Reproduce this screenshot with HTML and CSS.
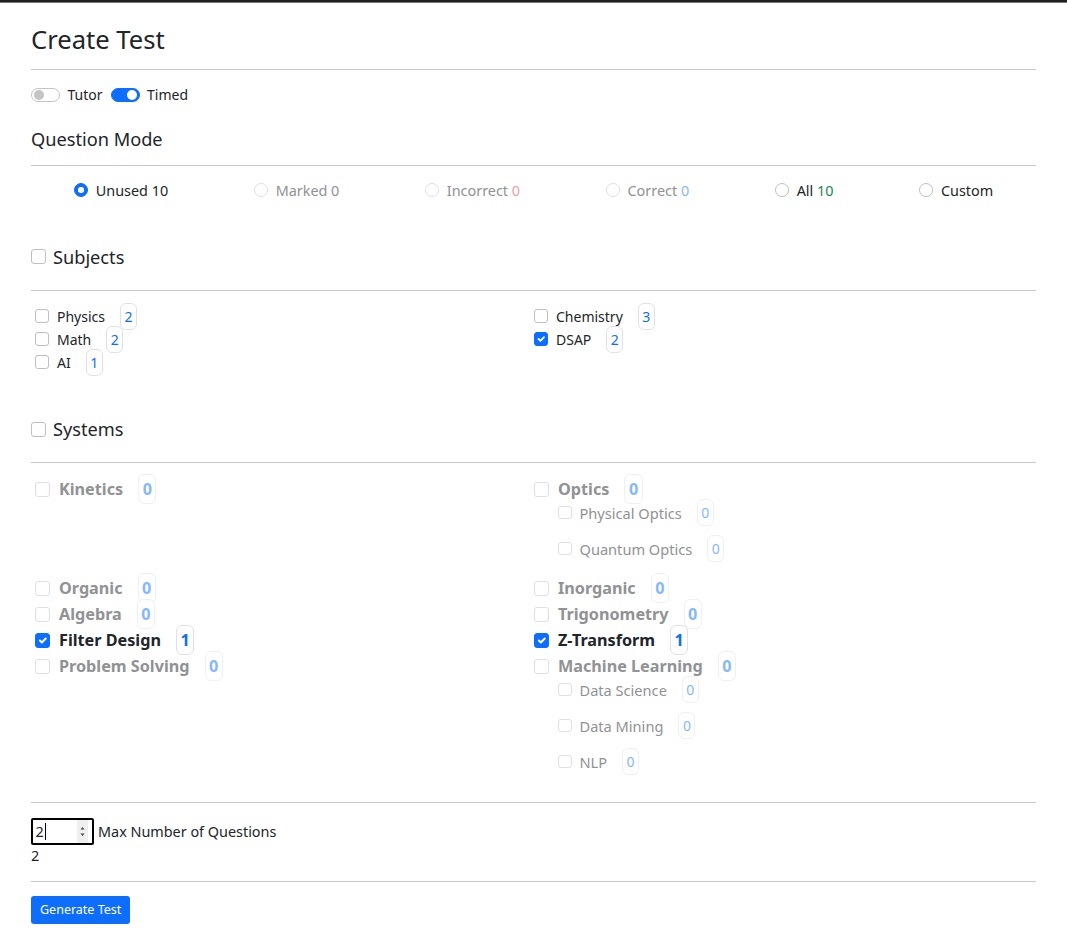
FILE: index.html
```html
<!DOCTYPE html>
<html lang="en">
<head>
<meta charset="utf-8">
<title>Create Test</title>
<link rel="stylesheet" href="styles.css">
</head>
<body>
<div class="topbar"></div>
<main class="page">
  <h1 class="title">Create Test</h1>
  <hr class="rule rule-title">

  <div class="modes">
    <label class="switch-item"><span class="switch"></span>Tutor</label>
    <label class="switch-item"><span class="switch on"></span>Timed</label>
  </div>

  <h2 class="section-title">Question Mode</h2>
  <hr class="rule rule-qm">

  <div class="radio-row">
    <label class="radio-item"><span class="radio on"></span>Unused 10</label>
    <label class="radio-item dis"><span class="radio"></span>Marked 0</label>
    <label class="radio-item dis"><span class="radio"></span>Incorrect&nbsp;<span class="n-red">0</span></label>
    <label class="radio-item dis"><span class="radio"></span>Correct&nbsp;<span class="n-blue">0</span></label>
    <label class="radio-item"><span class="radio"></span>All&nbsp;<span class="n-green">10</span></label>
    <label class="radio-item"><span class="radio"></span>Custom</label>
  </div>

  <div class="group-head group-subjects"><span class="cb cb-lg"></span>Subjects</div>
  <hr class="rule rule-group">

  <div class="subject-grid">
    <div class="subject-col">
      <div class="subj"><span class="cb"></span><span class="lbl">Physics</span><span class="badge">2</span></div>
      <div class="subj"><span class="cb"></span><span class="lbl">Math</span><span class="badge">2</span></div>
      <div class="subj"><span class="cb"></span><span class="lbl">AI</span><span class="badge">1</span></div>
    </div>
    <div class="subject-col">
      <div class="subj"><span class="cb"></span><span class="lbl">Chemistry</span><span class="badge">3</span></div>
      <div class="subj"><span class="cb on"><svg viewBox="0 0 20 20"><path d="m6 10 3 3 6-6" fill="none" stroke="#fff" stroke-width="3" stroke-linecap="round" stroke-linejoin="round"/></svg></span><span class="lbl">DSAP</span><span class="badge">2</span></div>
    </div>
  </div>

  <div class="group-head group-systems"><span class="cb cb-lg"></span>Systems</div>
  <hr class="rule rule-group rule-sys">

  <div class="sys-grid">
    <div class="sys-cell">
      <div class="sys-main dis"><span class="cb"></span><span class="lbl">Kinetics</span><span class="badge">0</span></div>
    </div>
    <div class="sys-cell">
      <div class="sys-main dis"><span class="cb"></span><span class="lbl">Optics</span><span class="badge">0</span></div>
      <div class="sys-sub dis"><span class="cb"></span><span class="lbl">Physical Optics</span><span class="badge">0</span></div>
      <div class="sys-sub dis"><span class="cb"></span><span class="lbl">Quantum Optics</span><span class="badge">0</span></div>
    </div>

    <div class="sys-cell">
      <div class="sys-main dis"><span class="cb"></span><span class="lbl">Organic</span><span class="badge">0</span></div>
    </div>
    <div class="sys-cell">
      <div class="sys-main dis"><span class="cb"></span><span class="lbl">Inorganic</span><span class="badge">0</span></div>
    </div>

    <div class="sys-cell">
      <div class="sys-main dis"><span class="cb"></span><span class="lbl">Algebra</span><span class="badge">0</span></div>
    </div>
    <div class="sys-cell">
      <div class="sys-main dis"><span class="cb"></span><span class="lbl">Trigonometry</span><span class="badge">0</span></div>
    </div>

    <div class="sys-cell">
      <div class="sys-main"><span class="cb on"><svg viewBox="0 0 20 20"><path d="m6 10 3 3 6-6" fill="none" stroke="#fff" stroke-width="3" stroke-linecap="round" stroke-linejoin="round"/></svg></span><span class="lbl">Filter Design</span><span class="badge">1</span></div>
    </div>
    <div class="sys-cell">
      <div class="sys-main"><span class="cb on"><svg viewBox="0 0 20 20"><path d="m6 10 3 3 6-6" fill="none" stroke="#fff" stroke-width="3" stroke-linecap="round" stroke-linejoin="round"/></svg></span><span class="lbl">Z-Transform</span><span class="badge">1</span></div>
    </div>

    <div class="sys-cell">
      <div class="sys-main dis"><span class="cb"></span><span class="lbl">Problem Solving</span><span class="badge">0</span></div>
    </div>
    <div class="sys-cell">
      <div class="sys-main dis"><span class="cb"></span><span class="lbl">Machine Learning</span><span class="badge">0</span></div>
      <div class="sys-sub dis"><span class="cb"></span><span class="lbl">Data Science</span><span class="badge">0</span></div>
      <div class="sys-sub dis"><span class="cb"></span><span class="lbl">Data Mining</span><span class="badge">0</span></div>
      <div class="sys-sub dis"><span class="cb"></span><span class="lbl">NLP</span><span class="badge">0</span></div>
    </div>
  </div>

  <hr class="rule rule-bottom">

  <div class="qty-row">
    <div class="num-input">
      <span class="num-val">2</span><span class="caret"></span>
      <span class="spin">
        <svg viewBox="0 0 11 23" width="11" height="23"><path d="M3.5 9.5 5.5 7 7.5 9.5Z" fill="#444"/><path d="M3.5 13.5 5.5 16 7.5 13.5Z" fill="#444"/></svg>
      </span>
    </div>
    <span class="qty-label">Max Number of Questions</span>
  </div>
  <div class="qty-val">2</div>

  <hr class="rule rule-final">

  <div class="actions">
    <button class="btn" type="button">Generate Test</button>
  </div>
</main>
</body>
</html>
```

FILE: styles.css
```css
* {
  box-sizing: border-box;
}

body {
  margin: 0;
  font-family: "Noto Sans", "Open Sans", sans-serif;
  font-size: 14px;
  color: #212529;
  background: #fff;
}

.topbar {
  height: 3px;
  background: linear-gradient(#1f1f1f 0 2px, #777 2px 3px);
}

.page {
  padding: 0 31px 10px;
}

.rule {
  height: 0;
  border: 0;
  border-top: 1px solid #c9cacc;
  margin: 0;
}

.title {
  margin: 21px 0 0;
  font-size: 25.6px;
  font-weight: 400;
  line-height: 32px;
}

.rule-title {
  margin-top: 13px;
}

/* switches */
.modes {
  margin-top: 14px;
  height: 21px;
  display: flex;
  align-items: center;
  gap: 8px;
}

.switch-item {
  display: flex;
  align-items: center;
  gap: 7.5px;
}

.switch {
  position: relative;
  width: 29px;
  height: 14px;
  border: 1px solid #c4c4c4;
  border-radius: 7px;
  background: #fff;
}

.switch::after {
  content: "";
  position: absolute;
  top: 1px;
  left: 1.5px;
  width: 10px;
  height: 10px;
  border-radius: 50%;
  background: #c4c4c4;
}

.switch.on {
  background: #0d6efd;
  border-color: #0d6efd;
}

.switch.on::after {
  left: auto;
  right: 1.5px;
  background: #fff;
}

.section-title {
  margin: 22px 0 0;
  font-size: 18.2px;
  font-weight: 400;
  line-height: 24px;
}

.rule-qm {
  margin-top: 14px;
}

/* radios */
.radio-row {
  margin-top: 13.5px;
  height: 21px;
  display: flex;
  justify-content: space-around;
  align-items: center;
  font-size: 14.4px;
}

.radio-item {
  display: flex;
  align-items: center;
}

.radio {
  flex: none;
  width: 14px;
  height: 14px;
  margin-right: 8px;
  border: 1px solid #bfbfbf;
  border-radius: 50%;
  background: #fff;
  display: flex;
  align-items: center;
  justify-content: center;
}

.radio.on {
  background: #0d6efd;
  border-color: #0d6efd;
}

.radio.on::after {
  content: "";
  width: 5.5px;
  height: 5.5px;
  border-radius: 50%;
  background: #fff;
}

.radio-item.dis {
  color: #909294;
}

.radio-item.dis .radio {
  border-color: #e0e0e0;
}

.n-red {
  color: #f0a0a7;
}

.n-blue {
  color: #86b7fe;
}

.n-green {
  color: #198754;
}

/* group headings */
.group-head {
  display: flex;
  align-items: center;
  gap: 7px;
  font-size: 18.2px;
  line-height: 24px;
}

.group-subjects {
  margin-top: 44px;
}

.group-systems {
  margin-top: 43.5px;
}

.rule-group {
  margin-top: 21.5px;
}

.rule-sys {
  margin-top: 21px;
}

/* checkboxes */
.cb {
  flex: none;
  width: 14px;
  height: 14px;
  border: 1px solid #bfbfbf;
  border-radius: 3px;
  background: #fff;
  display: flex;
  align-items: center;
  justify-content: center;
}

.cb-lg {
  width: 15px;
  height: 15px;
}

.cb.on {
  background: #0d6efd;
  border-color: #0d6efd;
}

.cb svg {
  width: 100%;
  height: 100%;
  display: block;
}

/* badges */
.badge {
  flex: none;
  display: inline-block;
  margin-left: 15px;
  padding: 2px 3.5px;
  border: 1px solid #dee2e6;
  border-radius: 6px;
  color: #0d6efd;
  line-height: 21px;
  background: #fff;
}

/* subjects */
.subject-grid {
  margin-top: 13.5px;
  padding-left: 4px;
  display: grid;
  grid-template-columns: 499px 1fr;
}

.subject-col {
  display: flex;
  flex-direction: column;
}

.subj {
  height: 23px;
  display: flex;
  align-items: center;
}

.subj .cb {
  margin-right: 8px;
}

/* systems */
.sys-grid {
  margin-top: 13px;
  padding-left: 4px;
  display: grid;
  grid-template-columns: 499px 1fr;
  align-items: start;
}

.sys-main {
  height: 26px;
  display: flex;
  align-items: center;
  font-size: 16.2px;
  font-weight: 700;
}

.sys-main .cb {
  width: 15px;
  height: 15px;
  margin-right: 9px;
}

.sys-main .badge {
  line-height: 24px;
}

.sys-sub {
  height: 21px;
  margin-bottom: 15px;
  padding-left: 24px;
  display: flex;
  align-items: center;
  font-size: 14.6px;
}

.sys-sub:last-child {
  margin-bottom: 16px;
}

.sys-sub .cb {
  width: 13.5px;
  height: 13.5px;
  margin-right: 8px;
}

.sys-sub .badge {
  font-size: 14px;
}

.dis .lbl {
  color: #909294;
}

.dis .cb {
  border-color: #e0e0e0;
}

.dis .badge {
  color: #86b7fe;
  border-color: #eef0f2;
}

.rule-bottom {
  margin-top: 14px;
}

/* quantity */
.qty-row {
  margin-top: 15px;
  display: flex;
  align-items: center;
  gap: 4px;
  font-size: 14.4px;
}

.num-input {
  width: 63px;
  height: 27px;
  border: 2px solid #000;
  border-radius: 2px;
  display: flex;
  align-items: center;
  padding-left: 2.5px;
  padding-right: 4px;
  font-size: 14.4px;
}

.num-val {
  line-height: 21px;
}

.caret {
  width: 1px;
  height: 17px;
  margin-left: 1px;
  background: #000;
}

.spin {
  margin-left: auto;
  width: 11px;
  height: 23px;
  background: #efefef;
  display: flex;
}

.qty-val {
  line-height: 21px;
  font-size: 14.4px;
}

.rule-final {
  margin-top: 15px;
}

.actions {
  margin-top: 14px;
  display: flex;
}

.btn {
  font: inherit;
  font-size: 12.5px;
  line-height: 18px;
  padding: 5px 9px;
  border: 0;
  border-radius: 3px;
  background: #0d6efd;
  color: #fff;
}
```
